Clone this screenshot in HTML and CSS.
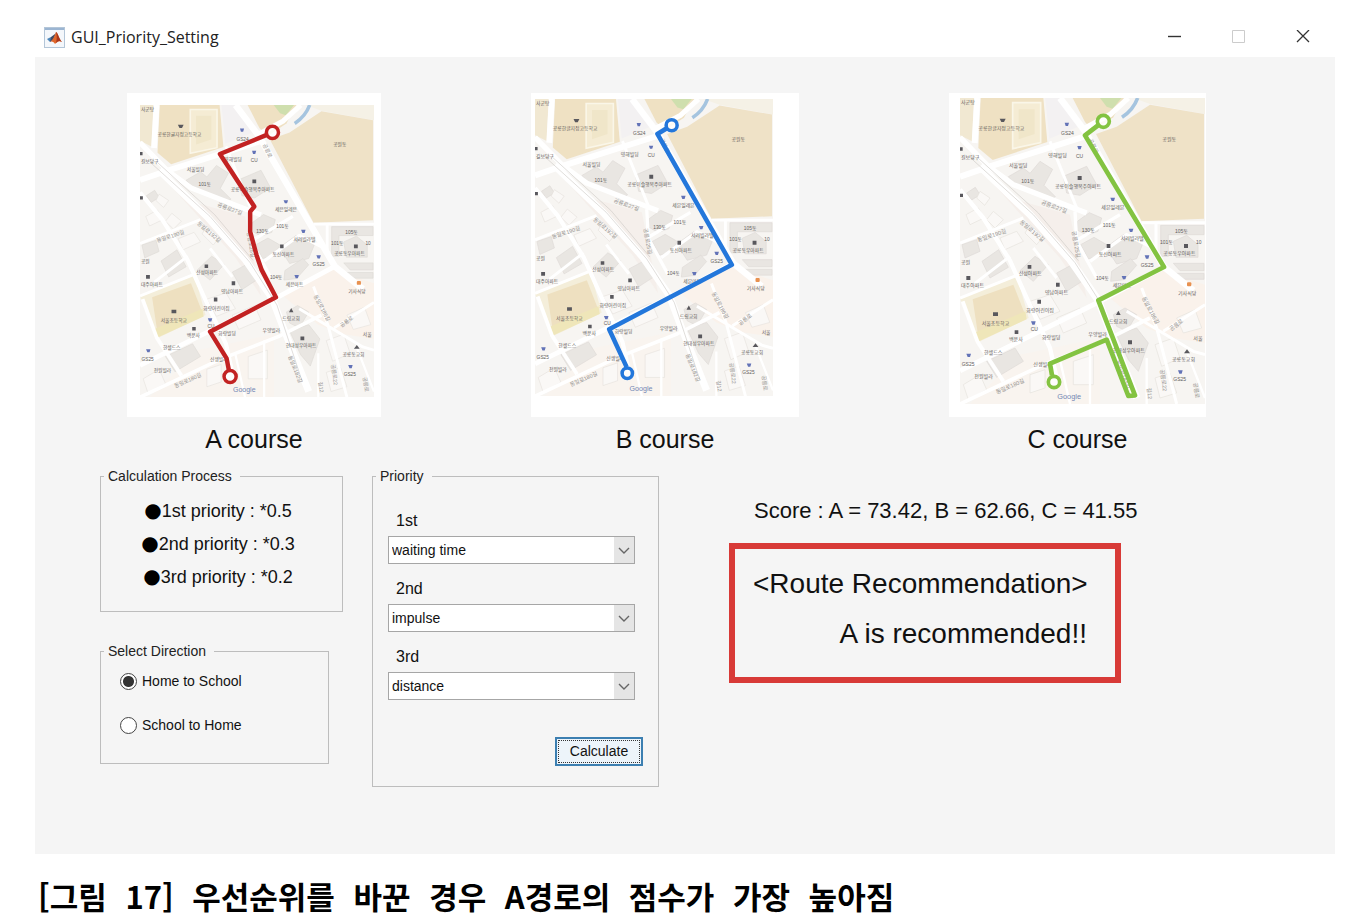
FILE: index.html
```html
<!DOCTYPE html>
<html lang="ko">
<head>
<meta charset="utf-8">
<title>GUI_Priority_Setting</title>
<link rel="stylesheet" href="styles.css">
</head>
<body>
<main class="window">
  <header class="titlebar">
    <svg class="app-icon" viewBox="0 0 21 21" aria-hidden="true">
      <rect x="0.5" y="0.5" width="20" height="20" fill="#f4f7fb" stroke="#b4c6d8"/>
      <rect x="1" y="1" width="19" height="2" fill="#9bb5d2"/>
      <path d="M3 12L7 10L9 12L6 15Z" fill="#4a84b8"/>
      <path d="M7 10L11 7L12 5L10 12L6 15Z" fill="#424a63"/>
      <path d="M12 5C14 6 15 12 18 15C15 13 13 15 11 17C10 15 8 14 6 15C9 13 11 8 12 5Z" fill="#e0672b"/>
      <path d="M12 5C13 8 13 12 12 16C14 14 15 13 18 15C15 12 14 6 12 5Z" fill="#a8361c"/>
    </svg>
    <h1 class="title">GUI_Priority_Setting</h1>
    <div class="window-buttons">
      <button type="button" aria-label="Minimize"><svg viewBox="0 0 14 14"><path d="M0 6.5H13" stroke="#333" stroke-width="1.4"/></svg></button>
      <button type="button" aria-label="Maximize" disabled><svg viewBox="0 0 14 14"><path d="M0.5 0.5H12.5V12.5H0.5Z" fill="none" stroke="#ccc"/></svg></button>
      <button type="button" aria-label="Close"><svg viewBox="0 0 14 14"><path d="M1 0L13 12M13 0L1 12" stroke="#333" stroke-width="1.3"/></svg></button>
    </div>
  </header>

  <div class="content">
    <section class="courses">
      <figure class="course">
        <div class="card card-a">
          <svg class="map" viewBox="0 0 735 918" role="img" aria-label="A course map">
            <g id="basemap">
              <rect width="735" height="918" fill="#f7f5f2"/>
              <!-- parks and school grounds -->
              <path d="M0 0H42L36 130L0 112Z" fill="#f1e8d2"/>
              <path d="M62 0H250L262 132L98 186L55 150Z" fill="#efe1c3"/>
              <path d="M158 14H242V134L158 152Z" fill="#f5ecd4" stroke="#faf6e8" stroke-width="5"/>
              <path d="M176 34H224V108L176 124Z" fill="#f0e6c9"/>
              <path d="M256 0H305L358 85L268 122Z" fill="#f3f1f2"/>
              <path d="M338 0H492L460 58L400 98L375 72Z" fill="#efe1c3"/>
              <path d="M420 0H484L458 32L440 26Z" fill="#cfdfae"/>
              <path d="M520 0H735V48L570 18Z" fill="#f5f1e6"/>
              <path d="M408 108L470 86L570 20L732 48V362L545 370Z" fill="#efe2c7"/>
              <path d="M533 0Q520 36 486 58" fill="none" stroke="#a5c4df" stroke-width="11"/>
              <path d="M0 600L170 530L206 660L48 736Z" fill="#f4eeda"/>
              <path d="M38 604L160 560L196 652L55 716Z" fill="#eee0c0"/>
              <path d="M40 706L196 640L200 664L52 732Z" fill="#efe6b9"/>
              <path d="M450 600L600 515L735 560V735L640 720L560 690Z" fill="#faf2eb"/>
              <path d="M82 238L150 300L330 350L380 600L300 480Z" fill="#f5efeb"/>
              <path d="M180 770L420 720V918H30Z" fill="#f9f4ef"/>
              <!-- buildings -->
              <g fill="#e9e6e2" stroke="#dedad6" stroke-width="2">
                <path d="M145 236L190 210L210 226L240 190L278 214L252 262L286 296L262 310L225 280L160 254Z"/>
                <path d="M310 235L380 205L410 260L360 292L320 285Z"/>
                <path d="M352 370L388 344L425 360L414 400L380 412L350 395Z"/>
                <path d="M362 440L402 418L440 440L418 476L385 482Z"/>
                <path d="M438 448L490 410L548 438L530 482L470 498Z"/>
                <path d="M455 520L512 482L530 502L492 545L452 550Z"/>
                <path d="M602 382H732V410H625V475H602Z"/><path d="M640 430L680 412L714 440V478H648Z"/>
                <path d="M640 496H732V518H660Z"/><path d="M645 526H732V544H660Z"/>
                <path d="M460 650L495 630L530 650L500 700L470 685Z"/>
                <path d="M470 710L530 690L565 735L535 820L505 785Z"/>
                <path d="M180 518L225 475L265 500L220 550Z"/>
                <path d="M66 490L116 455L145 508L90 540Z"/>
                <path d="M6 440L50 425L60 460L15 480Z"/>
                <path d="M290 525L340 498L366 550L320 580Z"/>
                <path d="M80 790L165 750L190 790L110 838Z"/>
                <path d="M20 285L46 268L60 290L35 306Z"/>
              </g>
              <g fill="#faf8f6" stroke="#e6e2dd" stroke-width="2">
                <path d="M60 280L90 300L74 322L50 300ZM18 350L55 330L72 360L30 380ZM100 340L130 365L105 390L80 365Z"/>
                <path d="M120 420L170 400L190 430L135 455ZM210 380L250 415L230 440L195 405Z"/>
                <path d="M210 610L270 590L300 640L240 664ZM290 660L360 630L380 675L310 705Z"/>
                <path d="M585 740L640 720L660 780L605 805ZM650 660L705 635L725 690L670 705Z"/>
                <path d="M340 790L400 770V860H340ZM210 830L255 815V870L210 885ZM585 840L630 825L650 885L600 900Z"/>
                <path d="M10 860L60 830L80 875L25 905Z"/>
              </g>
              <!-- streets -->
              <g fill="none" stroke="#fff" stroke-linejoin="round">
                <path d="M52 0L44 135" stroke-width="18"/>
                <path d="M0 236L90 205L375 115" stroke-width="18"/>
                <path d="M300 0L375 100L612 507L700 578" stroke-width="20"/>
                <path d="M375 90L450 50L505 0" stroke-width="16"/>
                <path d="M0 118L85 205L160 260L340 330L380 345" stroke-width="16"/>
                <path d="M60 205L210 350L330 485L415 607L450 700L530 900" stroke-width="22"/>
                <path d="M0 275L70 360L150 488L200 600L270 750L290 840" stroke-width="13"/>
                <path d="M0 435L190 360M40 560L150 475M0 600L180 528" stroke-width="9"/>
                <path d="M0 818L215 712L430 605L612 507" stroke-width="15"/>
                <path d="M8 610L52 730L130 850" stroke-width="12"/>
                <path d="M0 918L250 800L440 725L570 660" stroke-width="11"/>
                <path d="M345 340L350 430L410 540M345 430L480 350M390 490L500 410L590 455" stroke-width="10"/>
                <path d="M588 375V470M545 374H735M270 130L350 330M290 540L220 450" stroke-width="9"/>
                <path d="M545 570L590 690L650 918M500 640L700 760L735 770M610 700L735 620" stroke-width="9"/>
                <path d="M390 740V918M300 785L330 918M560 780V918M680 760L735 900" stroke-width="7"/>
              </g>
              <path d="M30 178L220 350L345 494L430 628L510 870M52 178L235 345L355 488" fill="none" stroke="#cfcbc7" stroke-width="2"/>
              <!-- place markers -->
              <g fill="#59585d">
                <path d="M119 62H137L132 72H124Z"/><path d="M0 148H8V158H0ZM0 287H9V297H0Z"/>
                <path d="M353 234H365V246H353ZM440 438H451V450H440ZM672 438H684V450H672ZM203 501H214V512H203Z"/>
                <path d="M19 534H31V546H19ZM288 554H299V566H288ZM232 605H243V617H232ZM99 643H114V654H99Z"/>
                <path d="M468 651L475 638L482 651ZM504 727H516V739H504ZM672 766L681 754L690 766ZM164 697H175V708H164Z"/>
              </g>
              <g fill="#6373b7">
                <path d="M314 74H327L324 84H317ZM352 144H365L362 154H355ZM451 299H465L462 309H455ZM506 392H520L517 402H510Z"/>
                <path d="M554 472H568L565 482H558ZM485 534H499L496 544H489ZM213 670H227L224 680H217ZM19 767H33L30 777H23ZM654 817H668L665 827H658Z"/>
              </g>
              <rect x="681" y="553" width="13" height="12" rx="3" fill="#e89150"/>
              <g class="map-labels">
                <text x="3" y="18">사군탕</text><text x="55" y="96">공릉한글지정고등학교</text>
                <text x="303" y="112">GS24</text><text x="265" y="177">영해빌딩</text><text x="348" y="180">CU</text>
                <text x="3" y="182">길보당구</text><text x="147" y="207">서울빌딩</text><text x="184" y="255">101동</text>
                <text x="285" y="270">공릉이슬행복주아파트</text><text x="607" y="129">공원동</text>
                <text x="424" y="332">세븐일레븐</text><text x="365" y="402">130동</text><text x="428" y="387">101동</text>
                <text x="482" y="427">서리빌라텔</text><text x="645" y="406">105동</text><text x="600" y="439">101동</text><text x="708" y="439">10</text>
                <text x="416" y="473">동신아파트</text><text x="610" y="471">공릉동우아파트</text><text x="542" y="507">GS25</text>
                <text x="3" y="497">공원</text><text x="176" y="530">신성아파트</text><text x="3" y="568">대주아파트</text>
                <text x="408" y="545">104동</text><text x="458" y="567">세븐마트</text><text x="654" y="590">기사식당</text>
                <text x="255" y="589">영남아파트</text><text x="199" y="643">화랑어린이집</text><text x="65" y="682">서울초등학교</text>
                <text x="447" y="676">드림교회</text><text x="212" y="699">CU</text><text x="147" y="728">백운사</text><text x="246" y="722">화랑빌딩</text>
                <text x="385" y="714">우양빌라</text><text x="72" y="767">한셀드스</text><text x="458" y="761">현대성우아파트</text>
                <text x="700" y="727">서울</text><text x="636" y="788">공릉동교회</text><text x="5" y="804">GS25</text><text x="220" y="805">신생빌라</text>
                <text x="43" y="840">전원빌라</text><text x="640" y="850">GS25</text>
              </g>
              <g class="street-labels">
                <text transform="translate(242 318) rotate(20)">공릉로27길</text>
                <text transform="translate(178 374) rotate(40)">동일로192길</text>
                <text transform="translate(54 432) rotate(-18)">동일로190길</text>
                <text transform="translate(335 400) rotate(80)">공릉로25길</text>
                <text transform="translate(385 125) rotate(65)">공릉로</text>
                <text transform="translate(545 600) rotate(62)">동일로186길</text>
                <text transform="translate(634 700) rotate(-38)">공릉로</text>
                <text transform="translate(111 889) rotate(-24)">동일로180길</text>
                <text transform="translate(465 790) rotate(68)">동일로182길</text>
                <text transform="translate(600 815) rotate(82)">공릉로22</text>
                <text transform="translate(700 855) rotate(82)">공릉로</text>
                <text transform="translate(560 870) rotate(82)">길12</text>
              </g>
              <text class="map-brand" x="292" y="903">Google</text>
            </g>
            <g class="route route-a"><path d="M398 94L251 154L359 319L346 335V398L366 471L382 518L427 604L220 712L272 796L279 832"/><circle cx="416" cy="86" r="19"/><circle cx="283" cy="853" r="19"/></g>
          </svg>
        </div>
        <figcaption>A course</figcaption>
      </figure>
      <figure class="course">
        <div class="card card-b">
          <svg class="map" viewBox="0 0 735 918" role="img" aria-label="B course map">
            <use href="#basemap"/>
            <g class="route route-b"><path d="M406 91L378 108L608 512L229 711L283 828"/><circle cx="422" cy="81" r="17"/><circle cx="285" cy="847" r="16"/></g>
          </svg>
        </div>
        <figcaption>B course</figcaption>
      </figure>
      <figure class="course">
        <div class="card card-c">
          <svg class="map" viewBox="0 0 735 918" role="img" aria-label="C course map">
            <use href="#basemap"/>
            <g class="route route-c"><path d="M414 82L375 112L612 507L415 607L525 892L505 894L440 725L270 797L276 832"/><circle cx="430" cy="70" r="18"/><circle cx="282" cy="852" r="17"/></g>
          </svg>
        </div>
        <figcaption>C course</figcaption>
      </figure>
    </section>

    <section class="controls">
      <div class="left">
        <fieldset class="panel">
          <legend>Calculation Process</legend>
          <ul class="process">
            <li><span class="dot">●</span>1st priority : *0.5</li>
            <li><span class="dot">●</span>2nd priority : *0.3</li>
            <li><span class="dot">●</span>3rd priority : *0.2</li>
          </ul>
        </fieldset>
        <fieldset class="panel direction">
          <legend>Select Direction</legend>
          <div class="choices">
            <label><input type="radio" name="direction" checked>Home to School</label>
            <label><input type="radio" name="direction">School to Home</label>
          </div>
        </fieldset>
      </div>

      <fieldset class="panel priority">
        <legend>Priority</legend>
        <div class="choosers">
          <label for="p1">1st</label>
          <div class="combo"><select id="p1"><option>waiting time</option><option>impulse</option><option>distance</option></select><svg viewBox="0 0 20 26"><path d="M5 11L10 16L15 11"/></svg></div>
          <label for="p2">2nd</label>
          <div class="combo"><select id="p2"><option>impulse</option><option>waiting time</option><option>distance</option></select><svg viewBox="0 0 20 26"><path d="M5 11L10 16L15 11"/></svg></div>
          <label for="p3">3rd</label>
          <div class="combo"><select id="p3"><option>distance</option><option>waiting time</option><option>impulse</option></select><svg viewBox="0 0 20 26"><path d="M5 11L10 16L15 11"/></svg></div>
          <button type="button" class="calculate"><span>Calculate</span></button>
        </div>
      </fieldset>

      <section class="result">
        <p class="score">Score : A = 73.42, B = 62.66, C = 41.55</p>
        <div class="recommendation">
          <h2>&lt;Route Recommendation&gt;</h2>
          <p>A is recommended!!</p>
        </div>
      </section>
    </section>
  </div>
</main>
<p class="caption"><span>[</span>그림 <span>17]</span> 우선순위를 바꾼 경우 <span>A</span>경로의 점수가 가장 높아짐</p>
</body>
</html>
```

FILE: styles.css
```css
* { box-sizing: border-box; }

body {
  margin: 0;
  background: #fff;
  color: #111;
  font: 14px/16px "Liberation Sans", Arial, sans-serif;
}

h1, h2, p, ul, figure { margin: 0; padding: 0; font-weight: normal; }

.window { margin: 0 37px 0 35px; }

/* title bar */
.titlebar {
  display: flex;
  align-items: center;
  height: 57px;
  padding: 17px 24px 0 9px;
}
.app-icon { width: 21px; height: 21px; margin-right: 6px; }
.title { font: 16px/20px "Open Sans", "Noto Sans", sans-serif; color: #222; }
.window-buttons { display: flex; gap: 48px; margin-left: auto; }
.window-buttons button {
  width: 16px;
  height: 16px;
  padding: 1px;
  border: 0;
  background: none;
}
.window-buttons svg { display: block; width: 14px; height: 14px; }

.content { padding: 36px 0 67px; background: #f5f5f5; }

/* course maps */
.courses {
  display: flex;
  justify-content: space-between;
  padding: 0 129px 0 92px;
}
.card { height: 324px; background: #fff; }
.card-a { width: 254px; padding: 12px 7px 0 13px; }
.card-b { width: 268px; padding: 6px 26px 0 4px; }
.card-c { width: 257px; padding: 5px 1px 0 11px; }
.map { display: block; width: 100%; height: auto; }
.course figcaption {
  margin-top: 7px;
  font-size: 25px;
  line-height: 30px;
  text-align: center;
}
.map-labels {
  fill: #5f5c5a;
  font: 15px "Liberation Sans", "Noto Sans CJK KR", sans-serif;
}
.street-labels {
  fill: #94918e;
  font: 17px "Liberation Sans", "Noto Sans CJK KR", sans-serif;
}
.map-brand { fill: #7387b4; font: 22px "Liberation Sans", sans-serif; }
.route { fill: none; stroke-width: 14; stroke-linejoin: round; }
.route circle { fill: #fffc; stroke-width: 11; }
.route-a { stroke: #c22222; }
.route-b { stroke: #2377db; }
.route-c { stroke: #83c341; }

/* controls */
.controls {
  display: grid;
  grid-template-columns: minmax(0, 272fr) minmax(0, 357fr) minmax(0, 392fr);
  align-items: start;
  padding: 14px 214px 0 65px;
}
.left { display: grid; gap: 31px; padding-right: 29px; }
.panel {
  min-width: 0;
  margin: 0;
  padding: 0;
  border: 1px solid #bdbdbd;
}
.panel legend { margin-left: 3px; padding: 0 8px 0 4px; color: #222; }

.process {
  padding: 11px 7px 17px 0;
  list-style: none;
  font-size: 18px;
  line-height: 33px;
  text-align: center;
}
.dot { font: 20px/20px "DejaVu Sans", sans-serif; color: #000; }

.direction { margin-right: 14px; }
.choices { display: grid; gap: 24px; padding: 12px 19px 28px; }
.choices label { display: flex; align-items: center; gap: 5px; height: 20px; }
.choices input {
  appearance: none;
  width: 17px;
  height: 17px;
  margin: 0;
  border: 1px solid #444;
  border-radius: 50%;
  background: #fff;
}
.choices input:checked { background: radial-gradient(circle, #333 5px, #fff 6px); }

.priority { margin-right: 70px; }
.choosers { padding: 12px 15px 20px; }
.choosers label {
  display: block;
  margin: 0 8px 6px;
  padding-top: 16px;
  font-size: 16px;
  line-height: 18px;
}
.combo { position: relative; margin-right: 8px; }
.combo select {
  appearance: none;
  display: block;
  width: 100%;
  height: 28px;
  padding: 0 24px 0 3px;
  border: 1px solid #a6a6a6;
  border-radius: 0;
  background: #fff;
  color: #111;
  font: inherit;
}
.combo svg {
  position: absolute;
  top: 1px;
  right: 1px;
  width: 20px;
  height: 26px;
  background: #e5e5e5;
  fill: none;
  stroke: #666;
  stroke-width: 1.4;
  pointer-events: none;
}
.calculate {
  display: block;
  width: 88px;
  height: 29px;
  margin: 37px 0 0 auto;
  padding: 1px;
  border: 2px solid #3c7fb1;
  background: #edf4fa;
  color: #111;
  font: inherit;
}
.calculate span { display: block; border: 1px dotted #333; line-height: 21px; }

/* result */
.score {
  padding: 30px 0 0 25px;
  font-size: 22px;
  line-height: 26px;
  white-space: nowrap;
}
.recommendation {
  margin-top: 19px;
  padding: 18px 28px 26px 18px;
  border: 6px solid #d83a37;
  font-size: 28px;
  line-height: 34px;
  white-space: nowrap;
}
.recommendation h2 { font-size: 28px; line-height: 34px; }
.recommendation p { margin-top: 16px; text-align: right; }

/* the wide gaps between words come from the monospaced family */
.caption {
  padding: 22px 38px 0;
  color: #000;
  font: bold 31px/40px "Liberation Mono", "Noto Sans CJK KR", monospace;
}
.caption span { font-family: "Noto Sans CJK KR", sans-serif; }
```
